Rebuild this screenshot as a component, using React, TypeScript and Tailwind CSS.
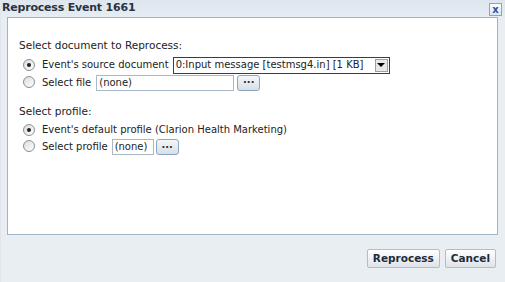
import React from "react";

// Reprocess event dialog (legacy admin UI look)

function Radio({ checked }: { checked?: boolean }) {
  return (
    <span className="inline-flex h-[12px] w-[12px] shrink-0 items-center justify-center rounded-full border border-[#8a8f96] bg-gradient-to-br from-[#dcdcdc] to-white">
      {checked && <span className="h-[4px] w-[4px] rounded-full bg-[#222]" />}
    </span>
  );
}

function DotsButton() {
  return (
    <button
      type="button"
      className="flex h-[16px] w-[23px] items-center justify-center rounded-[3px] border border-[#8fa4bd] bg-gradient-to-b from-[#f4f7fa] to-[#d6dfe9] pb-[5px] text-[10px] font-bold leading-none text-[#333]"
    >
      ...
    </button>
  );
}

function DialogButton({ label }: { label: string }) {
  return (
    <button
      type="button"
      className="h-[19px] rounded-[2px] border border-[#b5bcc5] bg-gradient-to-b from-white to-[#dfe3e8] px-[5px] text-[10.5px] font-bold leading-none text-[#1f2b3a]"
    >
      {label}
    </button>
  );
}

export default function App() {
  return (
    <div
      className="flex h-[282px] w-[505px] flex-col border-l border-[#dfe6ee] bg-[#e9eef3] text-[#222]"
      style={{ fontFamily: "Tahoma, 'DejaVu Sans', Verdana, sans-serif" }}
    >
      {/* title bar */}
      <div className="flex h-[17px] items-center justify-between bg-gradient-to-b from-[#dde6ef] to-[#e6ecf2] pl-[1px] pr-[3px]">
        <span className="text-[11px] font-bold tracking-[-0.2px] text-[#2b3340]">Reprocess Event 1661</span>
        <span className="mt-[2px] flex h-[13px] w-[13px] items-center justify-center border border-[#8da3bc] bg-gradient-to-b from-white to-[#dbe4ee] text-[10px] font-bold leading-none text-[#2a52a6]">
          x
        </span>
      </div>

      {/* content panel */}
      <div className="ml-[6px] mr-[7px] h-[218px] border border-[#9fb4cc] bg-white pl-[11px] pt-[22px] text-[10px] leading-none">
        <div className="text-[10.5px]">Select document to Reprocess:</div>
        <div className="mt-[6px] flex h-[17px] items-center">
          <span className="ml-[4px] mr-[7px]"><Radio checked /></span>
          <span>Event's source document</span>
          <span className="ml-[4px] flex h-[17px] w-[217px] items-center justify-between border border-[#3c3c3c] pl-[2px]">
            <span>0:Input message [testmsg4.in] [1 KB]</span>
            <span className="mr-[1px] flex h-[13px] w-[13px] items-center justify-center border border-[#9aa0a8] bg-[#e8e8e8]">
              <span className="h-0 w-0 border-x-[4px] border-t-[4px] border-x-transparent border-t-black" />
            </span>
          </span>
        </div>
        <div className="mt-[1px] flex h-[16px] items-center">
          <span className="ml-[4px] mr-[7px]"><Radio /></span>
          <span>Select file</span>
          <span className="ml-[5px] flex h-[16px] w-[138px] items-center border border-[#a9b8c9] pl-[2px]">(none)</span>
          <span className="ml-[3px]"><DotsButton /></span>
        </div>

        <div className="mt-[15px] text-[10.5px]">Select profile:</div>
        <div className="mt-[6px] flex h-[16px] items-center">
          <span className="ml-[4px] mr-[7px]"><Radio checked /></span>
          <span>Event's default profile (Clarion Health Marketing)</span>
        </div>
        <div className="mt-[1px] flex h-[16px] items-center">
          <span className="ml-[4px] mr-[7px]"><Radio /></span>
          <span>Select profile</span>
          <span className="ml-[4px] flex h-[16px] w-[42px] items-center border border-[#a9b8c9] pl-[2px]">(none)</span>
          <span className="ml-[2px]"><DotsButton /></span>
        </div>
      </div>

      {/* footer buttons */}
      <div className="mt-[14px] flex justify-end gap-[5px] pr-[9px]">
        <DialogButton label="Reprocess" />
        <DialogButton label="Cancel" />
      </div>
    </div>
  );
}
